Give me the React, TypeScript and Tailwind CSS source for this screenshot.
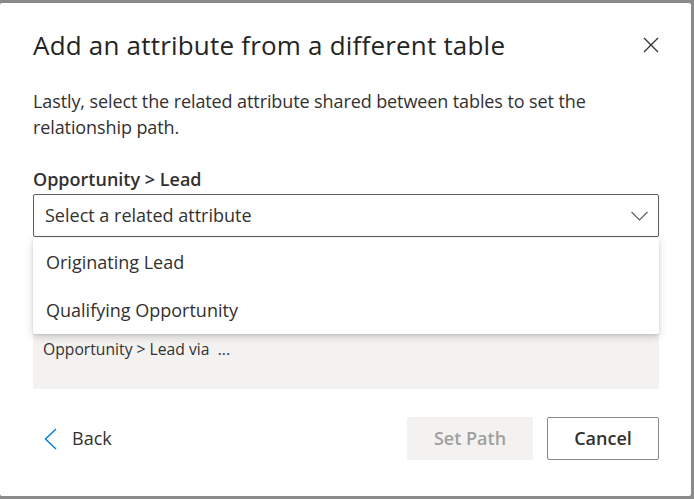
const font = { fontFamily: '"Open Sans", "Noto Sans", sans-serif' };

function CloseIcon() {
  return (
    <svg width="16" height="16" viewBox="0 0 16 16" fill="none" stroke="#323130" strokeWidth="1.3">
      <path d="M1 1l14 14M15 1L1 15" />
    </svg>
  );
}

function ChevronDownIcon() {
  return (
    <svg width="17" height="10" viewBox="0 0 17 10" fill="none" stroke="#605e5c" strokeWidth="1.1">
      <path d="M0.5 1l8 8 8-8" />
    </svg>
  );
}

function BackChevron() {
  return (
    <svg width="13" height="22" viewBox="0 0 13 22" fill="none" stroke="#0078d4" strokeWidth="1.4">
      <path d="M12 1L1.5 11 12 21" />
    </svg>
  );
}

export default function App() {
  return (
    <div
      className="h-[499px] w-[694px] bg-[#8a8a8a] pb-[3px] pr-[3px] pt-[3px]"
      style={font}
    >
      <div className="flex h-full flex-col rounded-[2px] bg-white pl-[33px] pr-[32px] text-[#323130]">
        <div className="mt-[26px] flex h-[32px] items-center justify-between">
          <h1 className="text-[26px] font-medium leading-[32px] tracking-[0.2px] text-[#252423]">
            Add an attribute from a different table
          </h1>
          <button className="mr-[-8px] flex h-[32px] w-[32px] items-center justify-center">
            <CloseIcon />
          </button>
        </div>

        <p className="mt-[27px] text-[18px] leading-[26px] tracking-[-0.1px]">
          Lastly, select the related attribute shared between tables to set the
          relationship path.
        </p>

        <label className="mt-[27px] text-[18px] font-semibold leading-[24px]">
          Opportunity &gt; Lead
        </label>

        <div className="relative mt-[3px]">
          <div className="flex h-[43px] items-center justify-between rounded-[2px] border border-[#605e5c] pl-[11px] pr-[10px]">
            <span className="text-[18px]">Select a related attribute</span>
            <ChevronDownIcon />
          </div>

          <div className="mt-[20px] h-[132px] bg-[#f3f2f1] px-[10px] pt-[80px]">
            <span className="text-[15.7px] leading-[22px]">Opportunity &gt; Lead via&nbsp; ...</span>
          </div>

          <ul className="absolute left-0 right-0 top-[44px] rounded-b-[2px] bg-white shadow-[0_3px_8px_rgba(0,0,0,0.16),0_1px_3px_rgba(0,0,0,0.1)]">
            <li className="flex h-[48px] items-center px-[13px] text-[18px]">Originating Lead</li>
            <li className="flex h-[48px] items-center px-[13px] text-[18px]">Qualifying Opportunity</li>
          </ul>
        </div>

        <div className="mt-[28px] flex items-center justify-between">
          <button className="flex h-[43px] items-center gap-[15px] pl-[11px] text-[18px]">
            <BackChevron />
            <span>Back</span>
          </button>
          <div className="flex gap-[14px]">
            <button className="h-[43px] w-[126px] rounded-[2px] bg-[#f3f2f1] text-[18px] font-semibold text-[#a19f9d]">
              Set Path
            </button>
            <button className="h-[43px] w-[112px] rounded-[2px] border border-[#8a8886] text-[18px] font-semibold">
              Cancel
            </button>
          </div>
        </div>
      </div>
    </div>
  );
}
